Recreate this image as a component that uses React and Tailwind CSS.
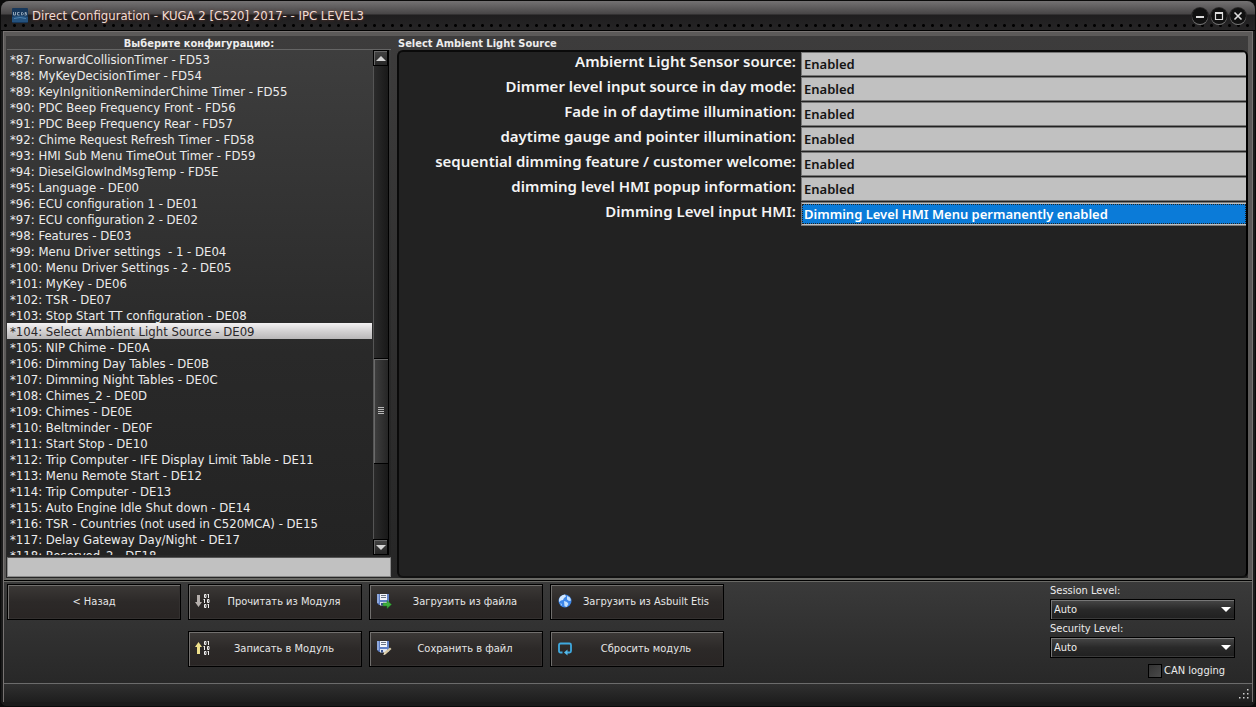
import React, { useState } from "react";

const CONFIGS = [
  "*87: ForwardCollisionTimer - FD53",
  "*88: MyKeyDecisionTimer - FD54",
  "*89: KeyInIgnitionReminderChime Timer - FD55",
  "*90: PDC Beep Frequency Front - FD56",
  "*91: PDC Beep Frequency Rear - FD57",
  "*92: Chime Request Refresh Timer - FD58",
  "*93: HMI Sub Menu TimeOut Timer - FD59",
  "*94: DieselGlowIndMsgTemp - FD5E",
  "*95: Language - DE00",
  "*96: ECU configuration 1 - DE01",
  "*97: ECU configuration 2 - DE02",
  "*98: Features - DE03",
  "*99: Menu Driver settings  - 1 - DE04",
  "*100: Menu Driver Settings - 2 - DE05",
  "*101: MyKey - DE06",
  "*102: TSR - DE07",
  "*103: Stop Start TT configuration - DE08",
  "*104: Select Ambient Light Source - DE09",
  "*105: NIP Chime - DE0A",
  "*106: Dimming Day Tables - DE0B",
  "*107: Dimming Night Tables - DE0C",
  "*108: Chimes_2 - DE0D",
  "*109: Chimes - DE0E",
  "*110: Beltminder - DE0F",
  "*111: Start Stop - DE10",
  "*112: Trip Computer - IFE Display Limit Table - DE11",
  "*113: Menu Remote Start - DE12",
  "*114: Trip Computer - DE13",
  "*115: Auto Engine Idle Shut down - DE14",
  "*116: TSR - Countries (not used in C520MCA) - DE15",
  "*117: Delay Gateway Day/Night - DE17",
  "*118: Reserved_2 - DE18",
];

const FIELDS = [
  { id: "sensor", label: "Ambiernt Light Sensor source:", value: "Enabled" },
  { id: "dimmer", label: "Dimmer level input source in day mode:", value: "Enabled" },
  { id: "fade", label: "Fade in of daytime illumination:", value: "Enabled" },
  { id: "gauge", label: "daytime gauge and pointer illumination:", value: "Enabled" },
  { id: "welcome", label: "sequential dimming feature / customer welcome:", value: "Enabled" },
  { id: "popup", label: "dimming level HMI popup information:", value: "Enabled" },
  {
    id: "level",
    label: "Dimming Level input HMI:",
    value: "Dimming Level HMI Menu permanently enabled",
    focused: true,
  },
];

function LogoIcon() {
  return (
    <svg width="16" height="16" viewBox="0 0 16 16" aria-hidden="true">
      <rect width="16" height="15" rx="1" fill="#17375a" />
      <path d="M0 9 Q8 6 16 9 V14 H0Z" fill="#24527e" />
      <g fill="none" stroke="#8fa3b5" strokeWidth="1">
        <path d="M1.500 4v3h2V4M7.500 4.500h-2v2.500h2M9.500 4.500v2.500h1l1-1v-.5l-1-1zM14.500 4.500h-1.500v1h1.500v1.500h-2" />
      </g>
      <path d="M2 10.500q6-2 12 0" fill="none" stroke="#4f82ae" />
    </svg>
  );
}

function Bits() {
  return (
    <g fill="none" stroke="#f2f2f2" strokeWidth="1">
      <path d="M9.500 1.500h1.500v3h-1.500zM13.500 1v4M12.500 1.500h1M9.500 6v4M8.500 6.500h1M12.500 6.500h1.500v3h-1.500zM9.500 11.500h1.500v3h-1.500zM13.500 11v4M12.500 11.500h1" />
    </g>
  );
}

function ReadIcon() {
  return (
    <svg width="16" height="16" viewBox="0 0 16 16" aria-hidden="true">
      <path d="M2 2h3v7h2l-3.500 5L0 9h2z" fill="#b5afac" />
      <Bits />
    </svg>
  );
}

function WriteIcon() {
  return (
    <svg width="16" height="16" viewBox="0 0 16 16" aria-hidden="true">
      <path d="M2 14h3V7h2L3.500 2 0 7h2z" fill="#efe08a" />
      <Bits />
    </svg>
  );
}

function Floppy() {
  return (
    <g>
      <path d="M1 1h12v11H3l-2-2z" fill="#5f7fc4" />
      <path d="M1 1h2v9H1z" fill="#8fa9dd" />
      <path d="M4 1h7v6H4z" fill="#f3f5fa" />
      <path d="M5 2.500h5M5 4.500h5" stroke="#6d7686" />
      <path d="M4 9h7v3.500H4z" fill="#dfe5f2" />
      <path d="M5 10h2v2.500H5z" fill="#37528f" />
    </g>
  );
}

function LoadIcon() {
  return (
    <svg width="16" height="16" viewBox="0 0 16 16" aria-hidden="true">
      <Floppy />
      <path d="M7 10h4V7.500l4.500 4-4.500 4V13H7z" fill="#3fae3c" stroke="#1f7a25" strokeWidth=".5" />
    </svg>
  );
}

function SaveIcon() {
  return (
    <svg width="16" height="16" viewBox="0 0 16 16" aria-hidden="true">
      <Floppy />
      <path d="M7.500 15l1-3 5.500-4.500 1.500 1.500-5.500 5z" fill="#d8c9a4" />
      <path d="M7.500 15l1-3 1.500 2z" fill="#e9ddbf" />
    </svg>
  );
}

function GlobeIcon() {
  return (
    <svg width="16" height="16" viewBox="0 0 16 16" aria-hidden="true">
      <circle cx="8" cy="8" r="6.500" fill="#3d86e8" />
      <path d="M3 4q2-2.500 5-2.500l1 2-2 1.500-1 2-2 .5L2 9q-.5-3 1-5z" fill="#d3e8ff" />
      <path d="M10 3l3 1.500 1 3-2 .5-2-1.500zM7 8l3 1 1.500 2-2 3-2-1z" fill="#c3dffc" />
      <path d="M3 10l2 1v2z" fill="#a8cdf8" />
    </svg>
  );
}

function ResetIcon() {
  return (
    <svg width="16" height="16" viewBox="0 0 16 16" aria-hidden="true">
      <path
        d="M5.500 12.500H3.500Q2 12.500 2 11V5Q2 3.500 3.500 3.500h9Q14 3.500 14 5v6q0 1.500-1.500 1.500H9"
        fill="none"
        stroke="#3fa9df"
        strokeWidth="1.800"
      />
      <path d="M10.500 9.500v6L7 12.500z" fill="#56bcec" />
    </svg>
  );
}

const BUTTON =
  "relative flex h-9 items-center justify-center border border-black bg-linear-to-b from-[#3c3937] via-[#2c2928] via-50% to-[#292524] text-[11px] text-[#e6e6e6] shadow-[inset_1px_1px_0_#72706e,inset_-1px_-1px_0_#33302f]";

function ToolButton({ icon, children, className = "" }) {
  return (
    <button type="button" className={`${BUTTON} ${icon ? "pl-6 pr-1.5" : "px-2"} ${className}`}>
      {icon && <span className="absolute left-1.5 top-2">{icon}</span>}
      <span className="grow text-center whitespace-nowrap">{children}</span>
    </button>
  );
}

function WindowButton({ label, children }) {
  return (
    <button
      type="button"
      aria-label={label}
      className="grid size-4 place-items-center rounded-full bg-[#111] shadow-[0_1px_0_#777,0_0_0_1px_#2a2829]"
    >
      <svg width="10" height="10" viewBox="0 0 10 10" fill="none" stroke="#dedede" aria-hidden="true">
        {children}
      </svg>
    </button>
  );
}

function ScrollButton({ label, d }) {
  return (
    <button
      type="button"
      aria-label={label}
      className="grid h-4 shrink-0 place-items-center border border-black bg-linear-to-b from-[#444] to-[#262626] shadow-[inset_1px_1px_0_#666]"
    >
      <svg width="10" height="5" viewBox="0 0 10 5" aria-hidden="true">
        <path d={d} fill="#d4d4d4" />
      </svg>
    </button>
  );
}

function LevelSelect({ id, label }) {
  return (
    <div className="flex flex-col">
      <label htmlFor={id} className="text-[11px] leading-4">
        {label}
      </label>
      <div className="relative">
        <select
          id={id}
          className="block h-[21px] w-full appearance-none border border-black bg-linear-to-b from-[#474747] via-[#292929] via-50% to-[#202020] pl-[3px] text-[11px] leading-4 text-[#eee] shadow-[inset_1px_1px_0_#777,inset_0_-1px_0_#3a3a3a] outline-none"
        >
          <option>Auto</option>
        </select>
        <svg className="pointer-events-none absolute right-1 top-2" width="10" height="5" viewBox="0 0 10 5" aria-hidden="true">
          <path d="M0 0h10L5 5z" fill="#fff" />
        </svg>
      </div>
    </div>
  );
}

export default function App() {
  const [selected, setSelected] = useState(17);
  return (
    <div className="flex h-screen flex-col overflow-hidden bg-[#0b0b0b] font-['DejaVu_Sans_Condensed','DejaVu_Sans',sans-serif] text-[#ececec]">
      <div className="flex min-h-0 grow flex-col rounded-t-lg rounded-b-md border border-[#0a0a0a] bg-[#1b1b1b]">
        <header className="flex h-[30px] shrink-0 items-center gap-1 rounded-t-lg border-b border-black bg-linear-[#6b696a_0px,#494748_13px,#1e1d1e_14px,#1c1b1c_30px] [background-image:radial-gradient(circle,#000_1px,transparent_2px),linear-gradient(#747273_0px,#474546_13px,#1f1e1f_14px,#262526_30px)] [background-position:0_22px,0_0] [background-repeat:repeat-x,no-repeat] [background-size:9px_5px,100%_100%] pt-px pl-[11px] pr-[9px]">
          <LogoIcon />
          <h1 className="grow text-[13px] leading-4 text-[#f0dcd4] [text-shadow:0_0_3px_#6b3a30]">
            Direct Configuration - KUGA 2 [C520] 2017- - IPC LEVEL3
          </h1>
          <div className="flex gap-[3px]">
            <WindowButton label="Minimize">
              <path d="M1 6h8" strokeWidth="2" />
            </WindowButton>
            <WindowButton label="Maximize">
              <path d="M1.500 2h7v6.500h-7z" strokeWidth="1.200" />
              <path d="M1 2h8" strokeWidth="2" />
            </WindowButton>
            <WindowButton label="Close">
              <path d="M1.500 1.500l7 7M8.500 1.500l-7 7" strokeWidth="1.600" />
            </WindowButton>
          </div>
        </header>

        <div className="mx-0.5 flex min-h-0 grow flex-col border-x border-t border-[#777372] bg-[#2c2c2c]">
          <main className="flex min-h-0 grow border-b-2 border-l-2 border-r-4 border-t-4 border-[#5c5a59] border-b-[#6a6a66] bg-linear-to-b from-[#3d3c3c] to-[#262626]">
            <section className="ml-px flex w-96 shrink-0 flex-col">
              <h2 className="h-3.5 border-b border-[#656565] text-center text-[11px] leading-[15px] font-bold">
                Выберите конфигурацию:
              </h2>
              <div className="flex min-h-0 grow bg-linear-to-b from-[#3e3e3e] via-[#292929] via-60% to-[#232323]">
                <ul className="min-w-0 grow overflow-hidden pt-px text-[13px]" role="listbox" aria-label="Конфигурации">
                  {CONFIGS.map((name, i) => (
                    <li
                      key={name}
                      role="option"
                      aria-selected={i === selected}
                      onClick={() => setSelected(i)}
                      className={`h-4 pl-[3px] leading-[18px] whitespace-pre ${
                        i === selected
                          ? "bg-linear-to-b from-[#f4f2f3] via-[#d4d2d3] via-50% to-[#b9b7b8] text-[#2a2628]"
                          : ""
                      }`}
                    >
                      {name}
                    </li>
                  ))}
                </ul>
                <div className="mr-0.5 ml-px flex w-4 shrink-0 flex-col border-r border-black bg-[#1b1b1b]">
                  <ScrollButton label="Вверх" d="M5 0l5 5H0z" />
                  <div className="flex min-h-0 grow flex-col border-l border-[#555] bg-linear-to-r from-[#2b2b2b] to-[#191919]">
                    <div className="grow-[293] basis-0" />
                    <div className="grid grow-[104] basis-0 place-items-center border-y border-black bg-linear-to-r from-[#404040] to-[#262626] shadow-[inset_1px_1px_0_#6a6a6a]">
                      <svg width="6" height="8" viewBox="0 0 6 8" stroke="#b8b8b8" aria-hidden="true">
                        <path d="M0 .5h6M0 2.500h6M0 4.500h6M0 6.500h6" />
                      </svg>
                    </div>
                    <div className="grow-[76] basis-0" />
                  </div>
                  <ScrollButton label="Вниз" d="M0 0h10L5 5z" />
                </div>
              </div>
              <input
                type="text"
                aria-label="Поиск"
                className="mt-0.5 mb-px h-5 border border-t-[#555] border-[#8a8a8a] bg-[#c1c1c1] px-1 text-[13px] text-black outline-none"
              />
            </section>

            <section className="ml-1.5 flex min-w-0 grow flex-col">
              <h2 className="h-3.5 pl-px text-[11px] leading-4 font-bold">Select Ambient Light Source</h2>
              <form className="min-h-0 grow overflow-hidden rounded-md border-2 border-[#0a0a0a] border-r-black border-b-[#111] bg-[#222]">
                {FIELDS.map(({ id, label, value, focused }) => (
                  <div key={id} className="flex h-[25px]">
                    <label
                      htmlFor={id}
                      className="w-[397px] shrink-0 text-right font-['Noto_Sans','Open_Sans',sans-serif] text-[15px] leading-[19px] font-semibold whitespace-nowrap text-[#f4f4f4]"
                    >
                      {label}
                    </label>
                    <div
                      className={`ml-[5px] h-6 min-w-0 grow border-y border-l border-[#777] bg-[#c1c1c1] ${focused ? "py-px" : ""}`}
                    >
                      <select
                        id={id}
                        defaultValue={value}
                        className={`block size-full appearance-none font-['Noto_Sans','Open_Sans',sans-serif] text-[13px] leading-4 font-semibold outline-none ${
                          focused
                            ? "border border-dotted border-[#222] bg-[#0b7bd8] pl-px text-white"
                            : "pl-0.5 text-[#141414]"
                        }`}
                      >
                        <option>{value}</option>
                      </select>
                    </div>
                  </div>
                ))}
              </form>
            </section>
          </main>

          <div className="flex shrink-0 items-start justify-between border-t border-black bg-linear-to-b from-[#3a3a3a] to-[#282828] pr-[17px] pl-[3px] shadow-[inset_0_1px_0_#6a6a66]">
            <div className="grid grid-cols-[174px_174px_174px_174px] gap-x-[7px] gap-y-[11px] pt-[3px]">
              <ToolButton>&lt; Назад</ToolButton>
              <ToolButton icon={<ReadIcon />}>Прочитать из Модуля</ToolButton>
              <ToolButton icon={<LoadIcon />}>Загрузить из файла</ToolButton>
              <ToolButton icon={<GlobeIcon />}>Загрузить из Asbuilt Etis</ToolButton>
              <ToolButton icon={<WriteIcon />} className="col-start-2">
                Записать в Модуль
              </ToolButton>
              <ToolButton icon={<SaveIcon />}>Сохранить в файл</ToolButton>
              <ToolButton icon={<ResetIcon />}>Сбросить модуль</ToolButton>
            </div>
            <div className="flex h-[102px] w-[185px] flex-col gap-px pt-0.5">
              <LevelSelect id="session" label="Session Level:" />
              <LevelSelect id="security" label="Security Level:" />
              <label className="mt-1 mr-2.5 flex items-center gap-0.5 self-end text-[11px] leading-4">
                <input
                  type="checkbox"
                  className="size-3.5 appearance-none border border-black bg-linear-to-br from-[#333] to-[#4a4a4a] checked:bg-[#888]"
                />
                CAN logging
              </label>
            </div>
          </div>

          <footer className="flex h-[19px] shrink-0 items-end justify-end border-t border-[#6c6c6c] bg-linear-to-b from-[#303030] to-[#1e1e1e] pr-0.5 pb-0.5">
            <svg width="12" height="12" viewBox="0 0 12 12" fill="#d0d0d0" aria-hidden="true">
              <path d="M9 1h1.500v1.500H9zM5 5h1.500v1.500H5zM9 5h1.500v1.500H9zM1 9h1.500v1.500H1zM5 9h1.500v1.500H5zM9 9h1.500v1.500H9z" />
            </svg>
          </footer>
        </div>
        <div className="h-1 shrink-0" />
      </div>
    </div>
  );
}
